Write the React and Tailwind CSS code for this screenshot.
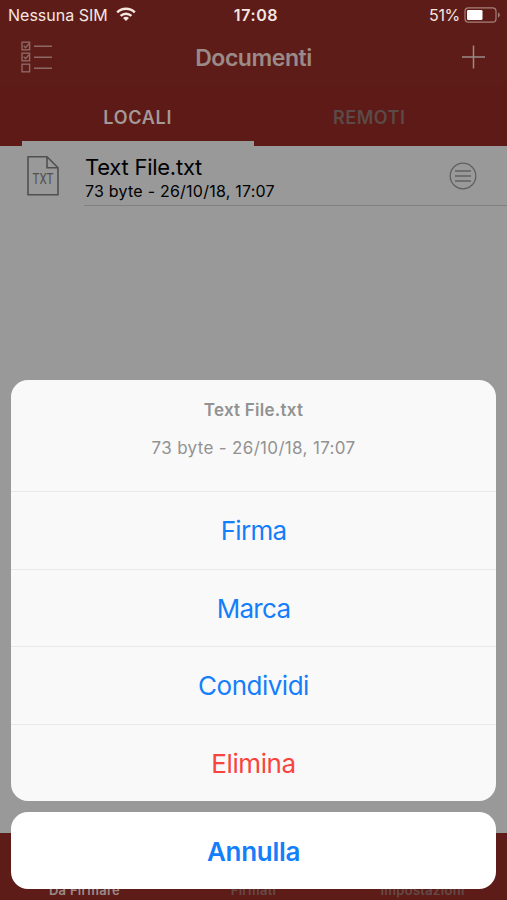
const actions = [
  { label: "Firma", style: "h-[78px] text-[#147efb] tracking-[-0.7px]" },
  { label: "Marca", style: "h-[77px] pt-px text-[#147efb] tracking-[-0.7px]" },
  { label: "Condividi", style: "h-[78px] text-[#147efb] tracking-[-0.5px]" },
  { label: "Elimina", style: "h-[77px] pt-px text-[#f8443c] tracking-[-0.4px]" },
];

function WifiIcon() {
  return (
    <svg className="ml-2 -mt-px h-[15px] w-5" viewBox="0 0 20 15" fill="none" stroke="#f5e6e0" strokeWidth="2.5">
      <path d="M1.2 5.4a12.6 12.6 0 0 1 17.6 0" />
      <path d="M4.6 8.8a7.8 7.8 0 0 1 10.8 0" />
      <path d="M7 11.1a4.3 4.3 0 0 1 6 0l-3 3z" fill="#f5e6e0" stroke="none" />
    </svg>
  );
}

function BatteryIcon() {
  return (
    <svg className="ml-1 h-4 w-[37px]" viewBox="0 0 37 16" fill="none">
      <rect x="1" y=".8" width="31" height="14.4" rx="3.5" stroke="#a5817a" strokeWidth="1.2" />
      <rect x="3" y="3" width="15.5" height="10" rx="1.2" fill="#fff" />
      <path d="M34 5.5c2.3.8 2.3 4.2 0 5z" fill="#a5817a" />
    </svg>
  );
}

function ChecklistIcon() {
  return (
    <svg className="-mt-[2px] h-[32px] w-[32px]" viewBox="0 0 32 32" fill="none" stroke="#8d6864" strokeWidth="1.4">
      <rect x="1" y="1.2" width="7.6" height="7.6" />
      <rect x="1" y="12.2" width="7.6" height="7.6" />
      <rect x="1" y="23.2" width="7.6" height="7.6" />
      <path d="m2.7 4.6 1.8 2L8 2.8M2.7 15.6l1.8 2L8 13.8" />
      <path d="M13 5.3h18M13 16.2h18M13 27.2h18" />
    </svg>
  );
}

export default function App() {
  return (
    <div className="relative flex h-[900px] w-full flex-col overflow-hidden bg-[#999] font-['Inter',sans-serif]">
      <header className="flex h-[146px] flex-col bg-[#5e1c18]">
        <div className="grid h-[30px] grid-cols-3 items-center whitespace-nowrap text-[16px] text-[#f5e6e0]">
          <div className="flex items-center pl-2">
            <span>Nessuna SIM</span>
            <WifiIcon />
          </div>
          <span className="pl-[5px] text-center font-semibold tracking-[0.6px]">17:08</span>
          <div className="flex items-center justify-end pr-[6px]">
            <span className="tracking-[-0.3px]">51%</span>
            <BatteryIcon />
          </div>
        </div>
        <div className="grid h-[56px] grid-cols-3 items-center">
          <div className="pl-[21px]"><ChecklistIcon /></div>
          <h1 className="text-center text-[23px] font-semibold tracking-[-0.45px] text-[#9b8b88]">Documenti</h1>
          <div className="flex justify-end pr-[21px]">
            <svg className="-mt-[2px] h-6 w-6" viewBox="0 0 24 24" stroke="#9b8b88" strokeWidth="1.5">
              <path d="M11.5 .5v23M0 12h23" />
            </svg>
          </div>
        </div>
        <nav className="grid h-[60px] grid-cols-2 bg-[#5e1a16] px-[22px] text-[18px] font-semibold">
          <div className="flex items-center justify-center border-b-[5px] border-[#999] pt-[8px] tracking-[0.7px] text-[#a39a98]">LOCALI</div>
          <div className="flex items-center justify-center pt-[3px] text-[#5b4a48] tracking-[0.5px]">REMOTI</div>
        </nav>
      </header>

      <main className="flex-1">
        <div className="flex h-[60px] pl-[27px]">
          <svg className="mt-[10px] h-10 w-8 shrink-0" viewBox="0 0 32 40" fill="none" stroke="#505050" strokeWidth="1.6">
            <path d="M1 .8h19l11 11v27H1zM20 .8v11h11" />
            <text x="16" y="28" textAnchor="middle" textLength="21" lengthAdjust="spacingAndGlyphs" fontSize="15" fontFamily="Roboto" fill="#505050" stroke="none">TXT</text>
          </svg>
          <div className="ml-[25px] flex flex-1 justify-between border-b border-[#808080] pr-[30px]">
            <div className="whitespace-nowrap pl-px pt-[8px] text-black">
              <div className="text-[22px] leading-[26px] tracking-[-0.25px]">Text File.txt</div>
              <div className="mt-px text-[16px] leading-5 tracking-[0.23px]">73 byte - 26/10/18, 17:07</div>
            </div>
            <svg className="mt-[16px] h-7 w-7" viewBox="0 0 28 28" fill="none" stroke="#606060" strokeWidth="1.3">
              <circle cx="14" cy="14" r="12.8" />
              <path d="M6 9h16M6 14h16M6 19h16" />
            </svg>
          </div>
        </div>
      </main>

      <footer className="grid h-[67px] grid-cols-3 items-end bg-[#5e1c18] text-center text-[13px] font-semibold tracking-[0.3px] text-[#654a48]">
        <span className="text-[#9b8b88]">Da Firmare</span>
        <span>Firmati</span>
        <span>Impostazioni</span>
      </footer>

      <div className="absolute inset-x-[11px] bottom-[11px] flex flex-col gap-[11px] text-center">
        <section className="h-[421px] overflow-hidden rounded-[17px] bg-[#f9f9f9]">
          <div className="h-[111px] pt-[18px] text-[#929292]">
            <div className="text-[17px] font-semibold leading-6 tracking-[0.25px]">Text File.txt</div>
            <div className="mt-[14px] text-[17px] leading-6 tracking-[0.33px]">73 byte - 26/10/18, 17:07</div>
          </div>
          {actions.map(({ label, style }) => (
            <button key={label} className={`flex w-full items-center justify-center border-t-[1.5px] border-[#e9e9ea] text-[26px] ${style}`}>
              {label}
            </button>
          ))}
        </section>
        <button className="h-[77px] rounded-[17px] bg-white pt-px text-[26px] font-semibold tracking-[-0.3px] text-[#147efb]">Annulla</button>
      </div>
    </div>
  );
}
